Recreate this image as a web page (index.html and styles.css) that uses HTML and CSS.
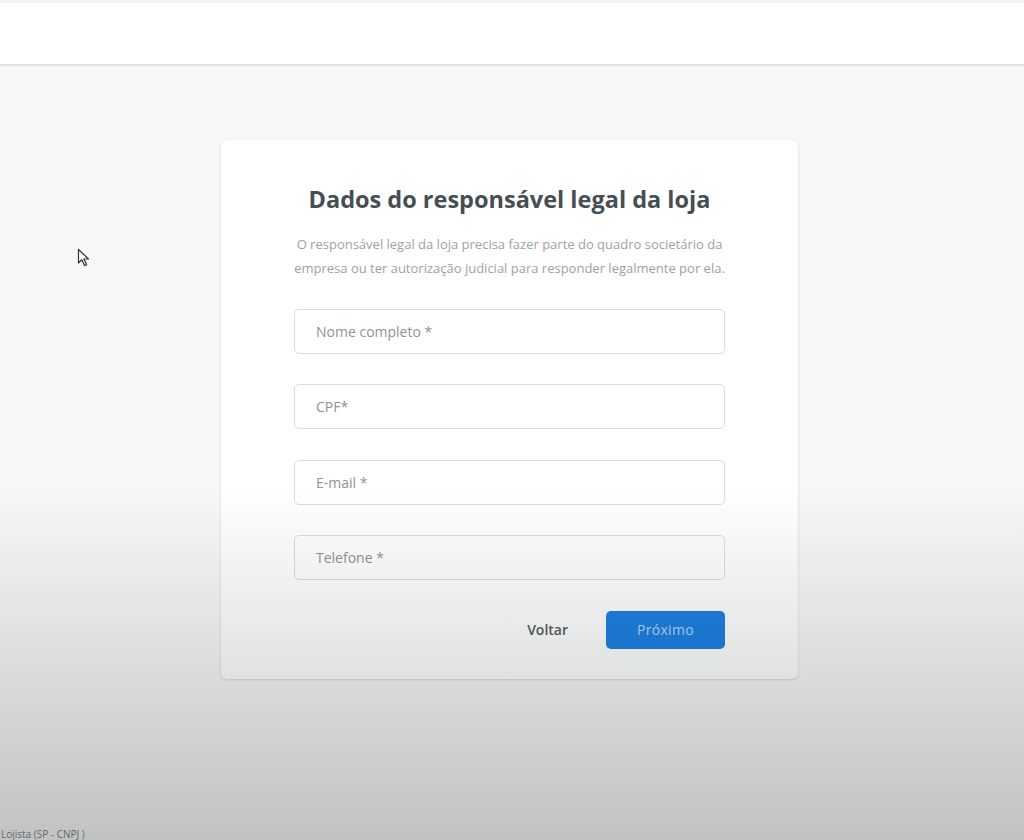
FILE: index.html
```html
<!DOCTYPE html>
<html lang="pt-BR">
<head>
<meta charset="utf-8">
<title>Dados do responsável legal da loja</title>
<link rel="stylesheet" href="styles.css">
</head>
<body>
<div class="page">
  <header class="topbar"></header>
  <main class="content">
    <section class="card">
      <h1 class="title">Dados do responsável legal da loja</h1>
      <p class="lead">O responsável legal da loja precisa fazer parte do quadro societário da empresa ou ter autorização judicial para responder legalmente por ela.</p>
      <form class="form">
        <input class="field" type="text" placeholder="Nome completo *">
        <input class="field" type="text" placeholder="CPF*">
        <input class="field" type="text" placeholder="E-mail *">
        <input class="field" type="text" placeholder="Telefone *">
        <div class="actions">
          <button type="button" class="btn-link">Voltar</button>
          <button type="button" class="btn-primary">Próximo</button>
        </div>
      </form>
    </section>
  </main>
  <footer class="foot">Lojista (SP - CNPJ )</footer>
</div>
<svg class="cursor" width="14" height="20" viewBox="0 0 14 20"><path d="M1.5 1.5 L1.5 15 L4.8 11.8 L7.6 17.6 L9.6 16.6 L6.9 11 L11.5 11 Z" fill="#fff" stroke="#333" stroke-width="1.2" stroke-linejoin="round"/></svg>
<div class="shade"></div>
</body>
</html>
```
FILE: styles.css
```css
html, body {
  margin: 0;
  padding: 0;
  height: 840px;
  overflow: hidden;
}
body {
  font-family: "Open Sans", "Noto Sans", sans-serif;
  background: #f7f7f7;
  position: relative;
}
.page {
  display: flex;
  flex-direction: column;
  height: 840px;
}
.topbar {
  flex: none;
  height: 66px;
  box-sizing: border-box;
  background: #ffffff;
  border-top: 3px solid #f3f3f3;
  border-bottom: 2px solid #e2e2e2;
}
.content {
  flex: 1;
  display: flex;
  justify-content: center;
  align-items: flex-start;
  padding-top: 74px;
}
.card {
  width: 577px;
  margin-right: 5px;
  box-sizing: border-box;
  background: #ffffff;
  border-radius: 6px;
  box-shadow: 0 1px 3px rgba(0,0,0,0.12), 0 0 1px rgba(0,0,0,0.06);
  padding: 44px 73px 30px;
}
.title {
  margin: 0;
  text-align: center;
  font-size: 23.5px;
  line-height: 30px;
  font-weight: 700;
  color: #464e54;
}
.lead {
  margin: 18px -12px 0;
  text-align: center;
  font-size: 13px;
  line-height: 24px;
  color: #9da2a6;
}
.form {
  margin-top: 29px;
  display: flex;
  flex-direction: column;
  gap: 30.4px;
}
.field {
  height: 45px;
  box-sizing: border-box;
  border: 1px solid #dcdcdc;
  border-radius: 5px;
  padding: 0 21px;
  font-family: inherit;
  font-size: 14px;
  color: #555;
  background: #fff;
  outline: none;
}
.field::placeholder {
  color: #8e9398;
}
.actions {
  display: flex;
  justify-content: flex-end;
  align-items: center;
  gap: 38px;
  margin-top: 0;
}
.btn-link {
  background: none;
  border: none;
  padding: 0;
  font-family: inherit;
  font-size: 14px;
  font-weight: 600;
  color: #565b5f;
  cursor: pointer;
}
.btn-primary {
  width: 119px;
  height: 38px;
  border: none;
  border-radius: 5px;
  background: #1c80e3;
  color: #b7d6f4;
  font-family: inherit;
  font-size: 14px;
  letter-spacing: 0.3px;
  cursor: pointer;
}
.foot {
  flex: none;
  height: 12px;
  font-size: 10px;
  line-height: 12px;
  color: #7d8080;
  white-space: nowrap;
  padding-left: 1px;
}
.cursor {
  position: absolute;
  left: 77px;
  top: 248px;
}
.shade {
  position: absolute;
  left: 0;
  top: 0;
  width: 100%;
  height: 840px;
  pointer-events: none;
  background: linear-gradient(to bottom, rgba(0,0,0,0) 0%, rgba(0,0,0,0) 58%, rgba(20,25,25,0.24) 100%);
}
```
